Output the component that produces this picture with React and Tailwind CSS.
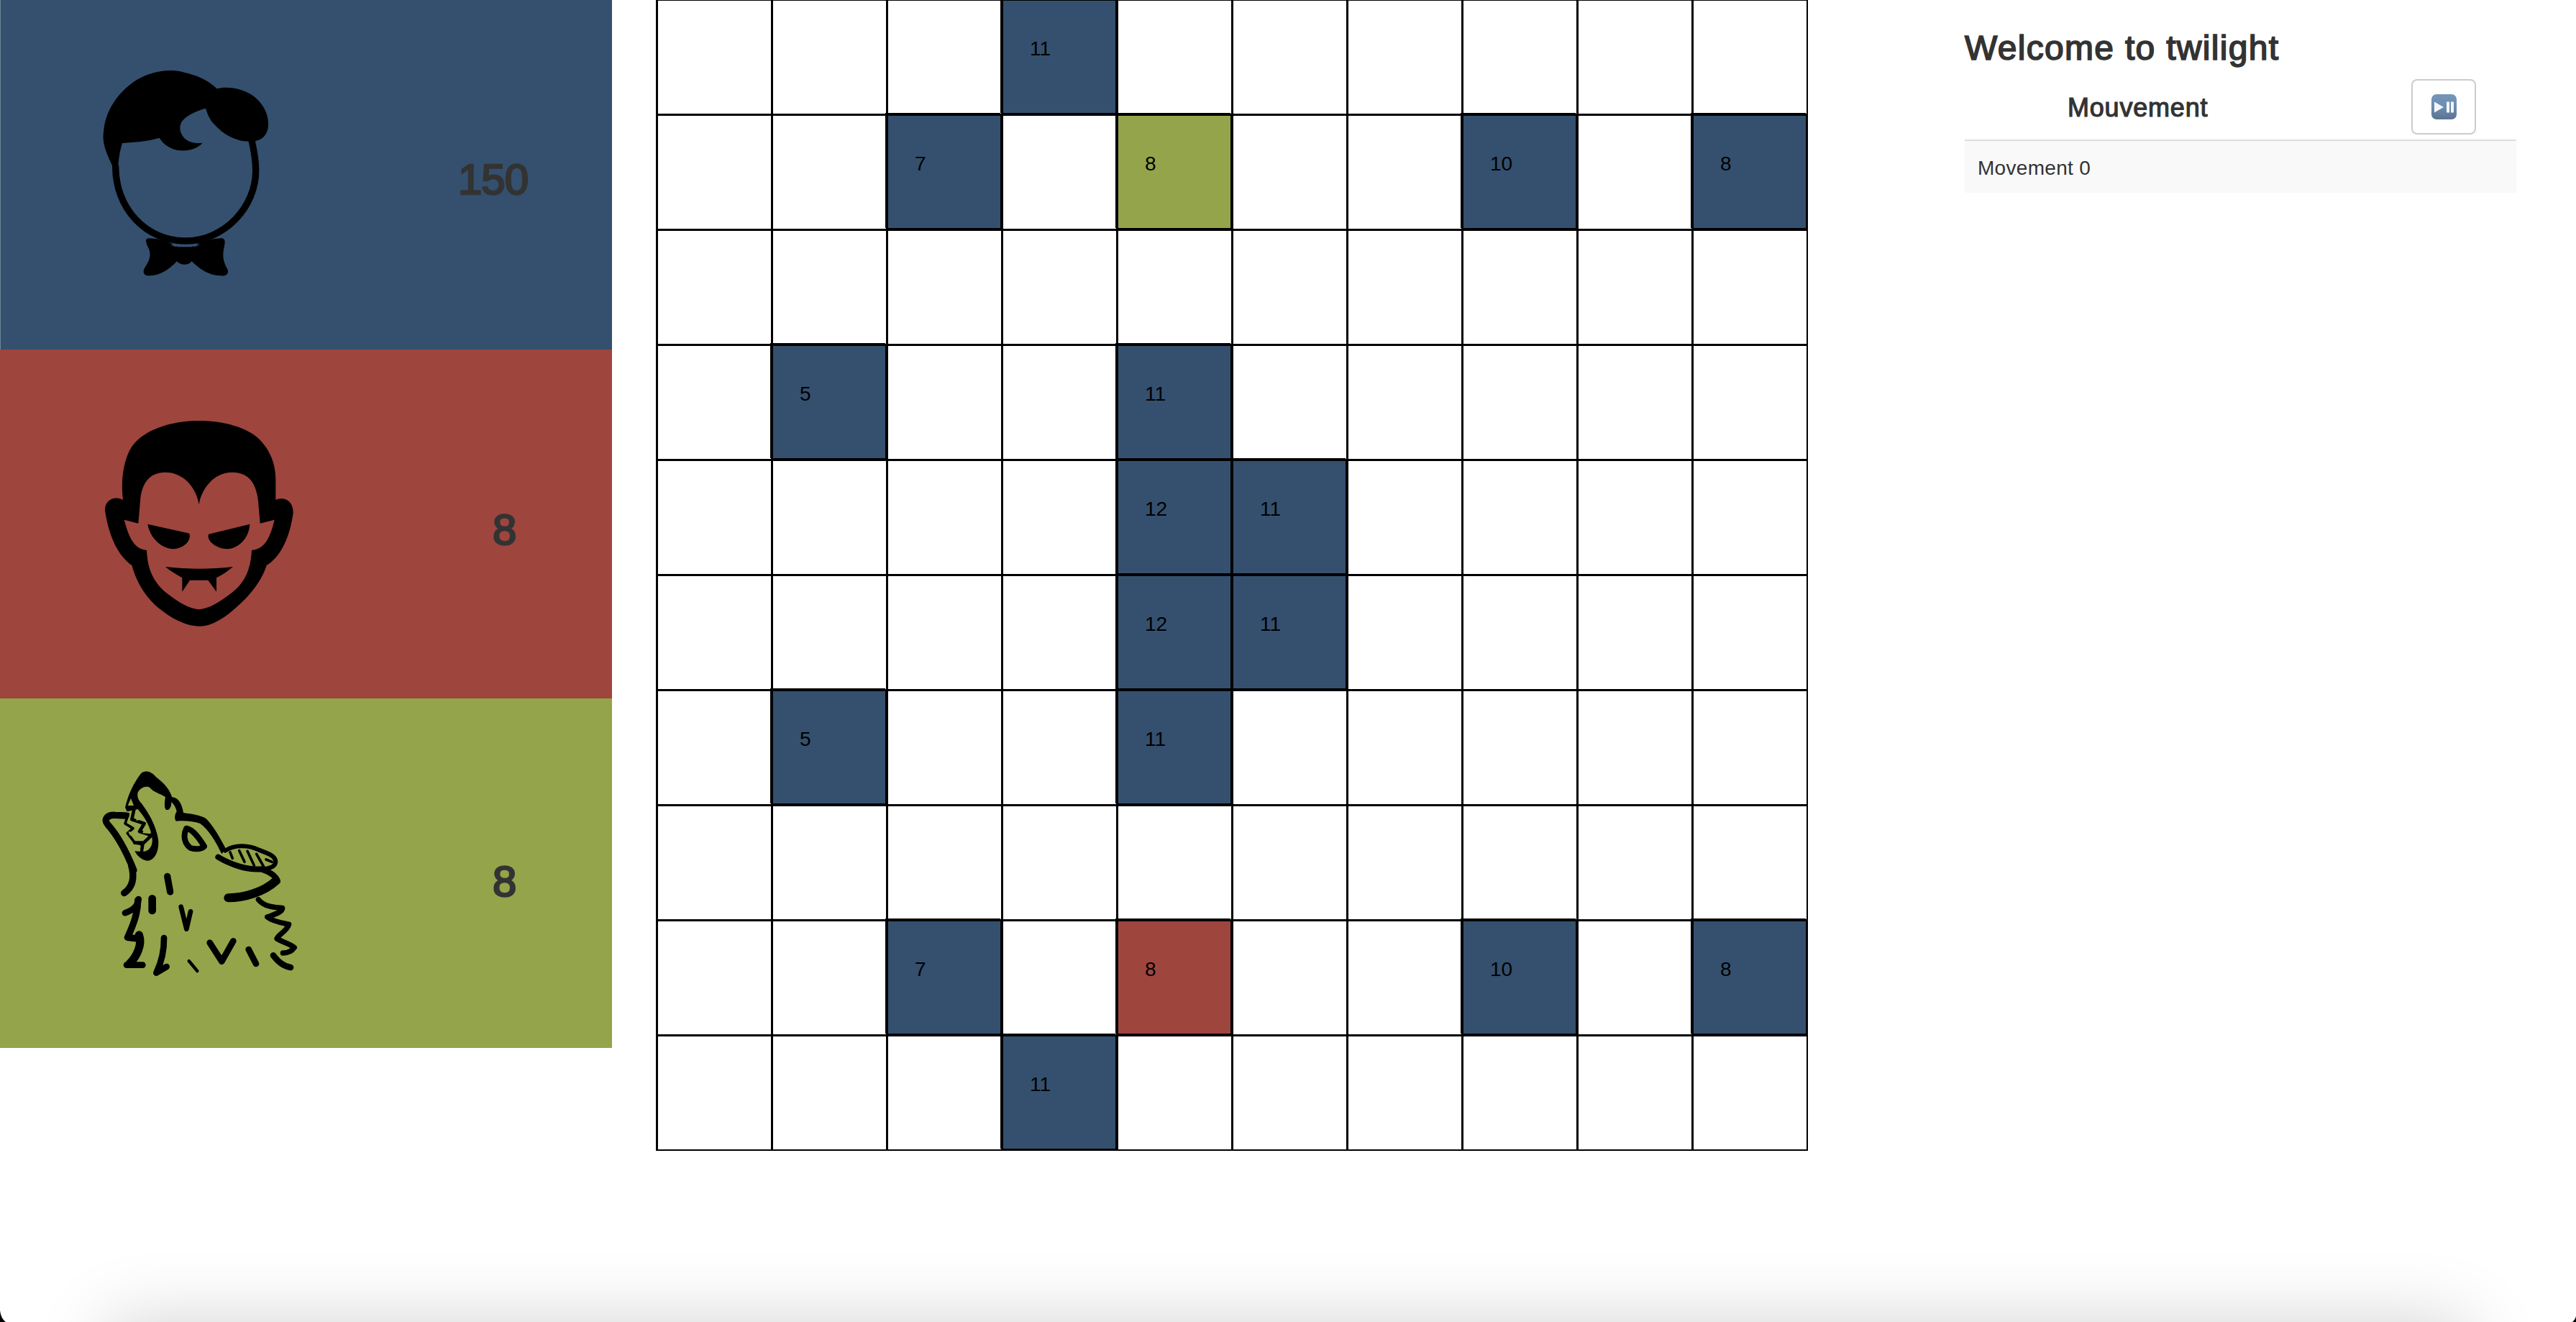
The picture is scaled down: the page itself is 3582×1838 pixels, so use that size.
const BLUE = 'bg-[#34506e]';

// row-col -> [value, background]
const tiles = {
  '0-3': ['11', BLUE],
  '1-2': ['7', BLUE],
  '1-4': ['8', 'bg-[#94a44a]'],
  '1-7': ['10', BLUE],
  '1-9': ['8', BLUE],
  '3-1': ['5', BLUE],
  '3-4': ['11', BLUE],
  '4-4': ['12', BLUE],
  '4-5': ['11', BLUE],
  '5-4': ['12', BLUE],
  '5-5': ['11', BLUE],
  '6-1': ['5', BLUE],
  '6-4': ['11', BLUE],
  '8-2': ['7', BLUE],
  '8-4': ['8', 'bg-[#9e453e]'],
  '8-7': ['10', BLUE],
  '8-9': ['8', BLUE],
  '9-3': ['11', BLUE],
};

function HumanIcon() {
  return (
    <svg width="280" height="320" viewBox="0 0 840 960" className="shrink-0">
      <path
        d="M110 455C85 400 65 360 72 310C80 220 130 150 200 100C260 60 340 45 400 60C460 72 510 95 545 130C580 120 640 125 690 155C740 190 765 240 758 295C750 335 720 350 690 350C630 355 570 320 535 280C515 260 505 235 498 212C460 222 420 240 400 265C380 295 395 335 430 350C450 358 470 358 485 356C465 378 430 390 395 388C350 385 320 360 305 335C250 352 200 352 150 357C140 390 135 420 133 460Z"
        fill="#000"
      />
      <path
        d="M122 450C120 630 250 765 413 765C580 765 708 620 707 470C707 430 700 390 690 345"
        fill="none"
        stroke="#000"
        strokeWidth="28"
      />
      <path
        d="M262 754C300 754 340 765 380 790L440 790C480 765 530 755 565 753C580 755 580 770 575 790C570 820 565 840 590 885C595 905 580 912 560 910C510 910 470 880 440 850C425 868 395 868 378 850C350 880 310 910 265 910C240 912 232 895 245 875C265 845 270 825 262 800C250 775 240 755 262 754Z"
        fill="#000"
      />
      <path d="M350 780L382 780L372 790Z M442 780L474 780L450 790Z" fill="#34506e" />
    </svg>
  );
}

function VampireIcon() {
  return (
    <svg width="360" height="360" viewBox="0 0 1080 1080" className="shrink-0">
      <path
        fillRule="evenodd"
        fill="#000"
        d="M530 135C640 135 730 165 780 210C830 260 850 320 850 380L850 465C880 450 925 465 923 520C915 580 890 690 812 738C790 810 730 880 660 935C610 975 570 992 530 992C490 992 430 970 380 930C310 880 270 810 250 738C180 690 150 590 138 510C135 465 180 445 213 465C205 400 210 320 240 260C280 180 400 135 530 135Z M530 485C520 420 470 350 390 350C320 350 290 400 285 470L277 563L218 548C235 610 255 670 312 675C315 760 345 810 390 850C440 890 490 920 530 922C570 920 620 890 670 850C720 810 745 760 750 675C810 670 830 610 845 548L785 563L777 470C770 400 740 350 670 350C590 350 540 420 530 485Z"
      />
      <path
        fill="#000"
        d="M316 566L490 605C500 640 460 668 425 670C370 668 325 620 316 566Z M742 566L570 608C560 640 610 670 650 670C700 665 740 620 742 566Z M390 744C480 755 580 755 672 744C650 762 625 780 603 790L603 848L568 800L492 800L460 848L460 790C435 775 410 762 390 744Z"
      />
    </svg>
  );
}

function WolfIcon() {
  return (
    <svg width="360" height="360" viewBox="0 0 1080 1080" fill="none" stroke="#000" strokeLinecap="round" strokeLinejoin="round" className="shrink-0">
      {/* head outline and upper muzzle */}
      <path
        stroke="none"
        fill="#000"
        d="M222 278C235 220 262 170 285 140C300 120 330 125 350 150C380 175 405 195 418 235C440 235 460 260 465 300C500 305 540 310 560 325C590 355 615 400 642 450L625 472C600 420 570 370 535 345C505 335 470 332 435 335C425 325 430 305 437 295C435 280 425 265 415 255C415 280 405 290 395 288C385 285 385 260 390 235C370 220 340 215 325 195C310 185 285 195 275 215C270 235 280 250 290 260C320 300 350 350 360 410C365 460 345 500 315 500C295 498 275 485 262 460L290 462C320 465 338 440 335 410C330 360 305 320 275 285L230 295Z"
      />
      {/* teeth */}
      <path strokeWidth="14" d="M262 272L250 328L302 345L282 378L332 394L300 425L262 425L295 432L290 465" />
      <path strokeWidth="11" d="M235 305L222 345L255 365L232 385L262 425" />
      <path
        stroke="none"
        fill="#94a44a"
        d="M246 240L258 270L233 270Z M272 300L300 328L268 332Z M305 355L328 388L295 385Z M262 432L285 435L285 462Z M207 312L222 312L218 332Z M235 378L248 380L243 398Z"
      />
      {/* lower jaw */}
      <path strokeWidth="28" d="M258 540C230 470 195 400 150 350C130 325 150 308 180 310L225 312" />
      {/* neck */}
      <path strokeWidth="28" d="M248 520C262 570 255 610 218 635" />
      <path strokeWidth="26" d="M278 660C275 690 255 705 222 718" />
      <path strokeWidth="28" d="M275 665C275 720 255 770 232 820L275 825" />
      <path strokeWidth="34" d="M280 810C295 850 270 900 240 930" />
      <path strokeWidth="26" d="M228 935L295 935" />
      {/* fur marks */}
      <path strokeWidth="28" d="M398 565L410 630" />
      <path strokeWidth="32" d="M335 658L335 708" />
      <path strokeWidth="20" d="M455 692L478 785L495 712" />
      <path strokeWidth="26" d="M384 822C385 870 375 920 352 968L395 942" />
      <path strokeWidth="13" d="M488 918L523 960" />
      <path strokeWidth="26" d="M575 842L625 920L673 835" />
      <path strokeWidth="26" d="M737 870L768 930" />
      <path strokeWidth="26" d="M840 895C860 920 880 940 912 945" />
      <path strokeWidth="22" d="M778 662C800 690 840 695 878 697C880 715 840 725 815 735C840 755 880 760 905 765C900 790 860 810 855 825C880 840 915 850 928 862C915 880 895 885 880 885" />
      {/* eye */}
      <path strokeWidth="24" d="M478 365C462 395 470 430 495 447C520 455 545 450 552 440C530 405 505 370 478 365Z" />
      {/* snout */}
      <path strokeWidth="24" d="M610 485C660 515 730 540 790 535C820 545 850 560 858 585" />
      <path strokeWidth="18" d="M640 458C680 430 740 435 780 455C820 470 850 480 850 505C850 525 820 535 790 535" />
      <path strokeWidth="11" d="M660 465L670 490M698 458L720 505M732 460L760 520M770 472L800 525M810 495L835 505" />
      <path strokeWidth="36" d="M652 655C720 655 800 630 850 585" />
    </svg>
  );
}

function PlayerCount({ className, children }) {
  return (
    <span className={`text-[60px] leading-none text-[#333] [-webkit-text-stroke:2.6px_#333] ${className}`}>
      {children}
    </span>
  );
}

function PlayIcon() {
  return (
    <svg width="35" height="35" viewBox="0 0 35 35">
      <defs>
        <linearGradient id="playBg" x1="0" y1="0" x2="0" y2="1">
          <stop offset="0" stopColor="#7895b8" />
          <stop offset="0.5" stopColor="#6c8db4" />
          <stop offset="1" stopColor="#5c7390" />
        </linearGradient>
      </defs>
      <rect width="35" height="35" rx="7" fill="url(#playBg)" />
      <path d="M4 10.5L17 18L4 25.5Z M21 10.5H25V25.5H21Z M27 10.5H31V25.5H27Z" fill="#f4f6f9" />
    </svg>
  );
}

export default function App() {
  const rows = Array.from({ length: 10 }, (_, i) => i);

  return (
    <div className="relative flex h-[1838px] w-[3582px] overflow-hidden bg-white font-['Liberation_Sans',sans-serif]">
      <div className="flex w-[912px] shrink-0 flex-col">
        <div className="flex h-[485.5px] w-[851px] items-start bg-[#34506e] pt-[80px] pl-[120px] shadow-[inset_1px_0_0_#6f869c]">
          <HumanIcon />
          <PlayerCount className="mt-[140px] ml-[237px] tracking-[-1px]">150</PlayerCount>
        </div>
        <div className="flex h-[485.5px] w-[851px] items-start bg-[#9e453e] pt-[54.5px] pl-[100px]">
          <VampireIcon />
          <PlayerCount className="mt-[166.5px] ml-[225px]">8</PlayerCount>
        </div>
        <div className="flex h-[486px] w-[851px] items-start bg-[#94a44a] pt-[59px] pl-[100px]">
          <WolfIcon />
          <PlayerCount className="mt-[166px] ml-[225px]">8</PlayerCount>
        </div>
      </div>

      <div className="-mt-[2px] grid h-[1602px] w-[1602px] shrink-0 grid-cols-[repeat(10,160px)] grid-rows-[repeat(10,160px)] border-r-[2px] border-b-[2px] border-black">
        {rows.flatMap((r) =>
          rows.map((c) => {
            const tile = tiles[`${r}-${c}`];
            return (
              <div
                key={`${r}-${c}`}
                className={`flex items-center border-t-[3px] border-l-[3px] border-black pb-[24px] pl-[37px] text-[28px] leading-none text-black ${tile ? `${tile[1]} shadow-[-1px_-1px_0_#000,inset_-1px_-1px_0_#000]` : ''}`}
              >
                {tile ? tile[0] : ''}
              </div>
            );
          })
        )}
      </div>

      <div className="ml-[218px] flex w-[767px] shrink-0 flex-col text-[#333]">
        <h3 className="mt-[41px] mb-[16px] text-[48px] leading-[52px] tracking-[1.3px] [-webkit-text-stroke:1.7px_#333]">Welcome to twilight</h3>
        <div className="flex h-[87px] items-start border-b-[2px] border-[#ddd]">
          <span className="mt-[20px] ml-[143px] text-[36px] leading-[42px] tracking-[0.8px] [-webkit-text-stroke:1.2px_#333]">Mouvement</span>
          <button className="mt-[1px] mr-[56px] ml-auto flex h-[77px] w-[90px] items-center justify-center rounded-lg border-2 border-[#ccc] bg-white">
            <PlayIcon />
          </button>
        </div>
        <div className="flex h-[72px] items-center bg-[#f9f9f9] pt-[4px] pl-[18px] text-[28px] tracking-[0.3px]">Movement 0</div>
      </div>

      {/* window shadow and corners of the captured screen */}
      <div className="absolute right-[150px] -bottom-[200px] left-[150px] h-[200px] shadow-[0_0_100px_0_rgba(0,0,0,0.18)]" />
      <svg width="8" height="16" viewBox="0 0 8 16" className="absolute bottom-0 left-0">
        <path d="M0 0C1 8 4 13 8 16L0 16Z" fill="#000" />
      </svg>
      <svg width="5" height="8" viewBox="0 0 5 8" className="absolute right-0 bottom-0">
        <path d="M5 0C4 4 2 6 0 8L5 8Z" fill="#000" />
      </svg>
    </div>
  );
}
